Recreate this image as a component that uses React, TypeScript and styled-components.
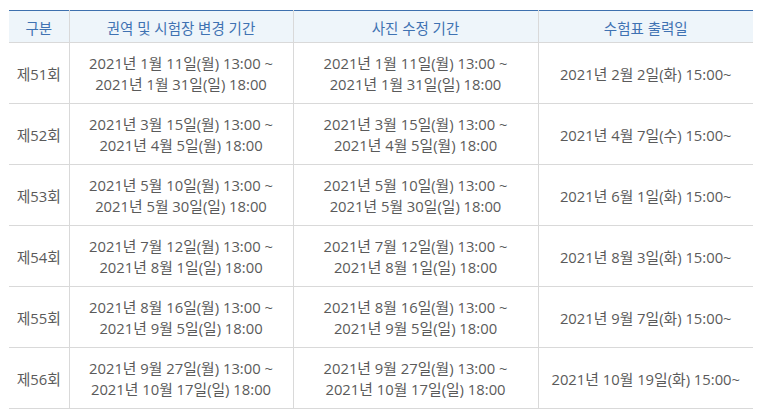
import React from 'react';
import styled, { createGlobalStyle } from 'styled-components';

const GlobalStyle = createGlobalStyle`
  body {
    margin: 0;
    background: #ffffff;
    font-family: "Open Sans", "Noto Sans CJK KR", sans-serif;
  }
`;

const Page = styled.div`
  padding: 10px 0 0 9px;
`;

const Table = styled.table`
  width: 744px;
  border-collapse: collapse;
  table-layout: fixed;
  border-top: 1px solid #3d70ae;
  font-size: 14.5px;
`;

const HeadCell = styled.th`
  height: 30px;
  padding: 1px 0 0;
  background: #eef5fa;
  color: #3f72b2;
  font-weight: 400;
  text-align: center;
  border-bottom: 1px solid #d9d9d9;
  border-left: 1px solid #d9d9d9;
  &:first-child {
    border-left: none;
  }
`;

const Cell = styled.td`
  height: 58px;
  padding: 2px 0 0;
  color: #5a5a5a;
  font-size: 14.8px;
  text-align: center;
  line-height: 21px;
  border-bottom: 1px solid #d9d9d9;
  border-left: 1px solid #d9d9d9;
  &:first-child {
    border-left: none;
  }
`;

interface Round {
  no: number;
  area: [string, string];
  photo: [string, string];
  print: string;
}

const rounds: Round[] = [
  {
    no: 51,
    area: ['2021년 1월 11일(월) 13:00 ~', '2021년 1월 31일(일) 18:00'],
    photo: ['2021년 1월 11일(월) 13:00 ~', '2021년 1월 31일(일) 18:00'],
    print: '2021년 2월 2일(화) 15:00~',
  },
  {
    no: 52,
    area: ['2021년 3월 15일(월) 13:00 ~', '2021년 4월 5일(월) 18:00'],
    photo: ['2021년 3월 15일(월) 13:00 ~', '2021년 4월 5일(월) 18:00'],
    print: '2021년 4월 7일(수) 15:00~',
  },
  {
    no: 53,
    area: ['2021년 5월 10일(월) 13:00 ~', '2021년 5월 30일(일) 18:00'],
    photo: ['2021년 5월 10일(월) 13:00 ~', '2021년 5월 30일(일) 18:00'],
    print: '2021년 6월 1일(화) 15:00~',
  },
  {
    no: 54,
    area: ['2021년 7월 12일(월) 13:00 ~', '2021년 8월 1일(일) 18:00'],
    photo: ['2021년 7월 12일(월) 13:00 ~', '2021년 8월 1일(일) 18:00'],
    print: '2021년 8월 3일(화) 15:00~',
  },
  {
    no: 55,
    area: ['2021년 8월 16일(월) 13:00 ~', '2021년 9월 5일(일) 18:00'],
    photo: ['2021년 8월 16일(월) 13:00 ~', '2021년 9월 5일(일) 18:00'],
    print: '2021년 9월 7일(화) 15:00~',
  },
  {
    no: 56,
    area: ['2021년 9월 27일(월) 13:00 ~', '2021년 10월 17일(일) 18:00'],
    photo: ['2021년 9월 27일(월) 13:00 ~', '2021년 10월 17일(일) 18:00'],
    print: '2021년 10월 19일(화) 15:00~',
  },
];

const App: React.FC = () => {
  return (
    <Page>
      <GlobalStyle />
      <Table>
        <colgroup>
          <col style={{ width: 60 }} />
          <col style={{ width: 224 }} />
          <col style={{ width: 245 }} />
          <col style={{ width: 215 }} />
        </colgroup>
        <thead>
          <tr>
            <HeadCell>구분</HeadCell>
            <HeadCell>권역 및 시험장 변경 기간</HeadCell>
            <HeadCell>사진 수정 기간</HeadCell>
            <HeadCell>수험표 출력일</HeadCell>
          </tr>
        </thead>
        <tbody>
          {rounds.map((r) => (
            <tr key={r.no}>
              <Cell>제{r.no}회</Cell>
              <Cell>
                {r.area[0]}
                <br />
                {r.area[1]}
              </Cell>
              <Cell>
                {r.photo[0]}
                <br />
                {r.photo[1]}
              </Cell>
              <Cell>{r.print}</Cell>
            </tr>
          ))}
        </tbody>
      </Table>
    </Page>
  );
};

export default App;
